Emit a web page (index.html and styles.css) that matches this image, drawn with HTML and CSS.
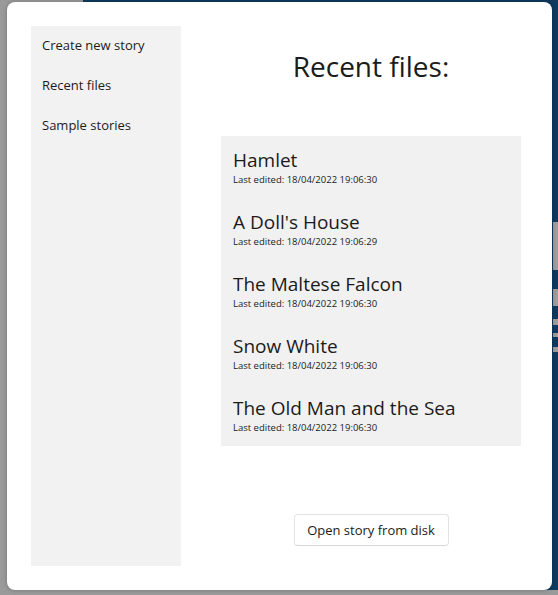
FILE: index.html
```html
<!DOCTYPE html>
<html>
<head>
<meta charset="utf-8">
<link rel="stylesheet" href="styles.css">
</head>
<body>
<div class="backdrop">
  <div class="blue-area"></div>
  <div class="edge-stripe s1"></div>
  <div class="edge-stripe s2"></div>
  <div class="edge-stripe s3"></div>
  <div class="edge-stripe s4"></div>
  <div class="edge-stripe s5"></div>
</div>
<div class="dialog">
  <nav class="sidebar">
    <div class="nav-item">Create new story</div>
    <div class="nav-item">Recent files</div>
    <div class="nav-item">Sample stories</div>
  </nav>
  <main class="main">
    <h1 class="title">Recent files:</h1>
    <div class="file-list">
      <div class="file">
        <div class="file-name">Hamlet</div>
        <div class="file-date">Last edited: 18/04/2022 19:06:30</div>
      </div>
      <div class="file">
        <div class="file-name">A Doll's House</div>
        <div class="file-date">Last edited: 18/04/2022 19:06:29</div>
      </div>
      <div class="file">
        <div class="file-name">The Maltese Falcon</div>
        <div class="file-date">Last edited: 18/04/2022 19:06:30</div>
      </div>
      <div class="file">
        <div class="file-name">Snow White</div>
        <div class="file-date">Last edited: 18/04/2022 19:06:30</div>
      </div>
      <div class="file">
        <div class="file-name">The Old Man and the Sea</div>
        <div class="file-date">Last edited: 18/04/2022 19:06:30</div>
      </div>
    </div>
    <button class="open-btn">Open story from disk</button>
  </main>
</div>
</body>
</html>
```
FILE: styles.css
```css
html, body {
  margin: 0;
  padding: 0;
}
body {
  width: 558px;
  height: 595px;
  overflow: hidden;
  background: #9a9a9a;
  font-family: "Open Sans", "Noto Sans", sans-serif;
  color: #1b1b1b;
  position: relative;
}
.backdrop {
  position: absolute;
  inset: 0;
}
.blue-area {
  position: absolute;
  left: 83px;
  top: 0;
  right: 0;
  bottom: 5px;
  background: #0f3a5e;
}
.edge-stripe {
  position: absolute;
  left: 553px;
  right: 0;
  background: #9d9d9d;
}
.s1 { top: 222px; height: 48px; }
.s2 { top: 289px; height: 17px; }
.s3 { top: 319px; height: 6px; }
.s4 { top: 333px; height: 4px; }
.s5 { top: 347px; height: 5px; }

.dialog {
  position: relative;
  margin: 2px 0 0 7px;
  width: 545px;
  height: 588px;
  box-sizing: border-box;
  background: #ffffff;
  border-radius: 8px;
  box-shadow: 0 0 4px rgba(0, 0, 0, 0.25);
  display: flex;
  padding: 24px 1px 24px 24px;
}
.sidebar {
  width: 150px;
  background: #f2f2f2;
  display: flex;
  flex-direction: column;
}
.nav-item {
  height: 40px;
  line-height: 39px;
  padding-left: 11px;
  font-size: 13px;
  color: #1b1b1b;
}
.main {
  flex: 1;
  margin-left: 10px;
  display: flex;
  flex-direction: column;
  align-items: center;
}
.title {
  margin: 18px 0 0 0;
  font-size: 28px;
  font-weight: 400;
  line-height: 44px;
  height: 44px;
  color: #1b1b1b;
}
.file-list {
  margin-top: 48px;
  width: 300px;
  background: #f1f1f1;
  display: flex;
  flex-direction: column;
}
.file {
  height: 62px;
  box-sizing: border-box;
  padding: 11px 12px 0 12px;
}
.file-name {
  font-size: 19px;
  line-height: 26px;
  color: #1b1b1b;
}
.file-date {
  font-size: 9.5px;
  line-height: 13px;
  color: #1b1b1b;
}
.open-btn {
  margin-top: 68px;
  width: 155px;
  height: 32px;
  background: #ffffff;
  border: 1px solid #e3e3e3;
  border-bottom-color: #d6d6d6;
  border-radius: 4px;
  font-family: "Open Sans", "Noto Sans", sans-serif;
  font-size: 13px;
  color: #1b1b1b;
  padding: 0;
}
```
